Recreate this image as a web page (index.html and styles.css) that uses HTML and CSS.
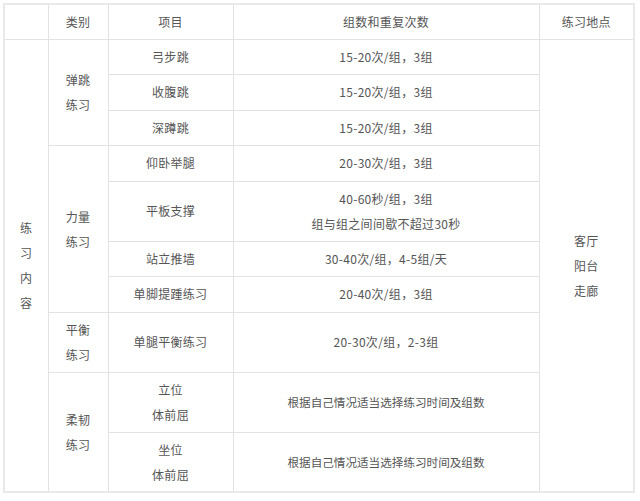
FILE: index.html
```html
<!DOCTYPE html>
<html lang="zh">
<head>
<meta charset="utf-8">
<link rel="stylesheet" href="styles.css">
</head>
<body>
<table class="plan">
  <colgroup>
    <col class="c1"><col class="c2"><col class="c3"><col class="c4"><col class="c5">
  </colgroup>
  <tr class="h35">
    <td></td><td>类别</td><td>项目</td><td>组数和重复次数</td><td>练习地点</td>
  </tr>
  <tr class="h35">
    <td rowspan="10" class="tall">练<br>习<br>内<br>容</td>
    <td rowspan="3" class="tall">弹跳<br>练习</td>
    <td>弓步跳</td><td>15-20次/组，3组</td>
    <td rowspan="10" class="tall">客厅<br>阳台<br>走廊</td>
  </tr>
  <tr class="h36"><td>收腹跳</td><td>15-20次/组，3组</td></tr>
  <tr class="h35"><td>深蹲跳</td><td>15-20次/组，3组</td></tr>
  <tr class="h36">
    <td rowspan="4" class="tall">力量<br>练习</td>
    <td>仰卧举腿</td><td>20-30次/组，3组</td>
  </tr>
  <tr class="h60"><td>平板支撑</td><td class="tall">40-60秒/组，3组<br>组与组之间间歇不超过30秒</td></tr>
  <tr class="h35"><td>站立推墙</td><td>30-40次/组，4-5组/天</td></tr>
  <tr class="h36"><td>单脚提踵练习</td><td>20-40次/组，3组</td></tr>
  <tr class="h60">
    <td class="tall">平衡<br>练习</td>
    <td>单腿平衡练习</td><td>20-30次/组，2-3组</td>
  </tr>
  <tr class="h60">
    <td rowspan="2" class="tall">柔韧<br>练习</td>
    <td class="tall">立位<br>体前屈</td><td class="long">根据自己情况适当选择练习时间及组数</td>
  </tr>
  <tr class="h60"><td class="tall">坐位<br>体前屈</td><td class="long">根据自己情况适当选择练习时间及组数</td></tr>
</table>
</body>
</html>
```
FILE: styles.css
```css
html, body {
  margin: 0;
  padding: 0;
  background: #ffffff;
}
body {
  font-family: "Noto Sans CJK SC", "Noto Sans", sans-serif;
  font-size: 12px;
  color: #555555;
}
.plan {
  margin: 3px 0 0 3px;
  border-collapse: collapse;
  table-layout: fixed;
  width: 630px;
  border: 2px solid #e9e9e9;
}
.c1 { width: 44px; }
.c2 { width: 60px; }
.c3 { width: 125px; }
.c4 { width: 306px; }
.c5 { width: 95px; }
.plan td {
  border: 1px solid #e2e2e2;
  padding: 0;
  text-align: center;
  vertical-align: middle;
  line-height: 18px;
  letter-spacing: 0.3px;
}
.plan td.tall {
  line-height: 25px;
}
.plan td.long {
  font-size: 11.6px;
  letter-spacing: 0;
}
.h35 { height: 35px; }
.h36 { height: 36px; }
.h60 { height: 60px; }
```
